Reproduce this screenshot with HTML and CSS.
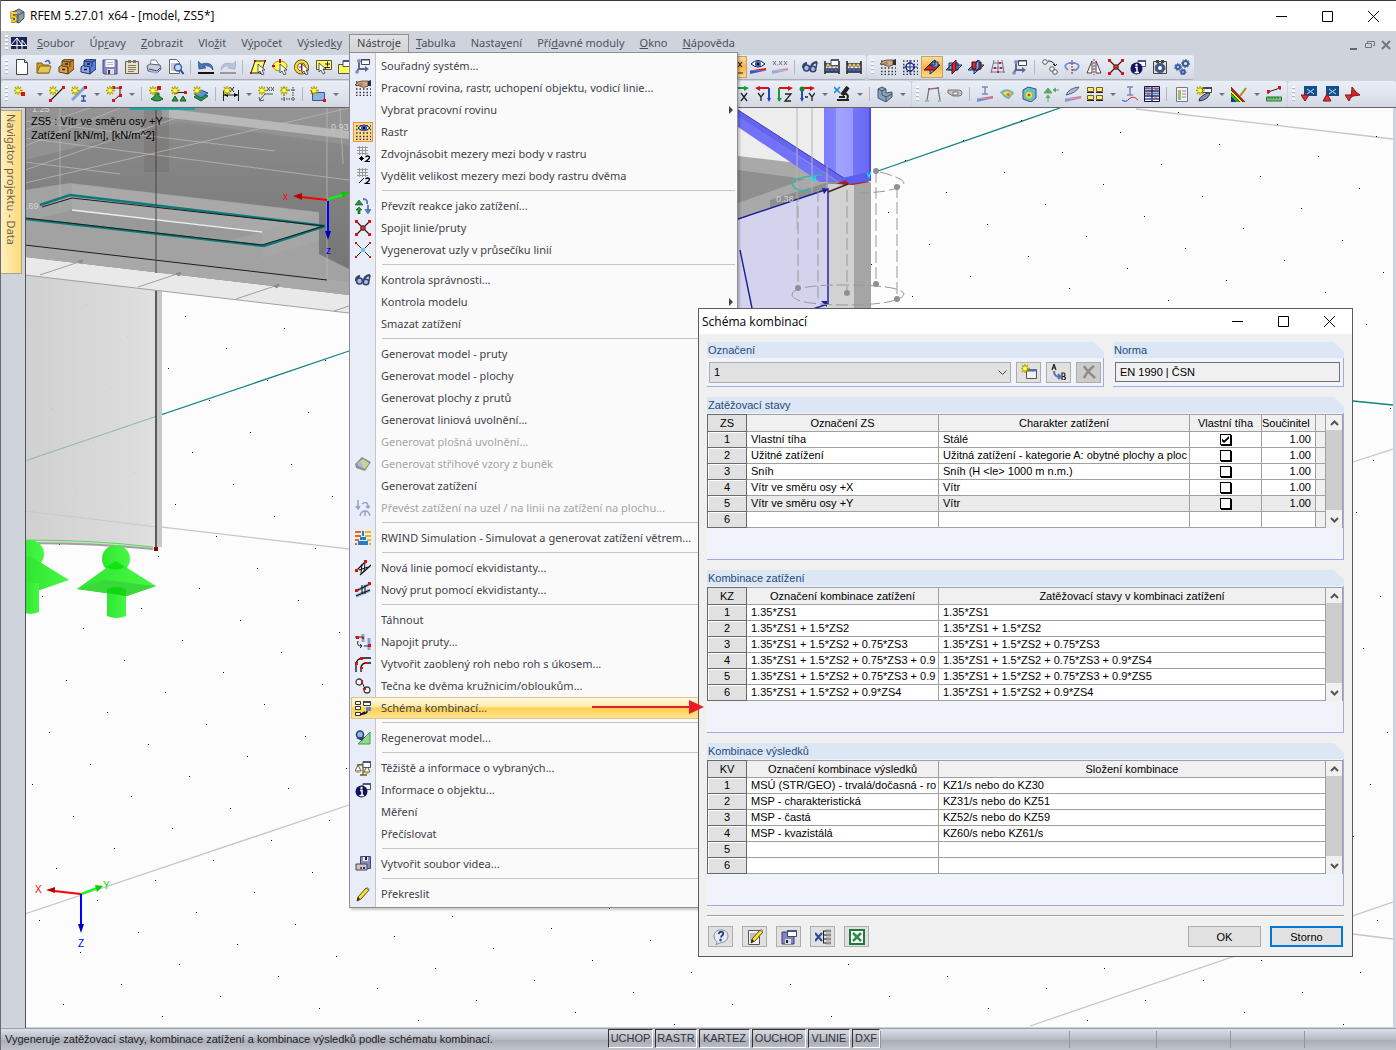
FILE: index.html
```html
<!DOCTYPE html>
<html lang="cs">
<head>
<meta charset="utf-8">
<title>RFEM 5.27.01 x64 - [model, ZS5*]</title>
<link rel="stylesheet" href="styles.css">
</head>
<body>
<svg class="defs" width="0" height="0" aria-hidden="true">
  <defs>
    <linearGradient id="col" x1="0" x2="1" y1="0" y2="0"><stop offset="0" stop-color="#cdcdcd"/><stop offset=".8" stop-color="#d9d9d9"/><stop offset="1" stop-color="#dedede"/></linearGradient>
    <linearGradient id="deck" x1="0" x2="0" y1="0" y2="1"><stop offset="0" stop-color="#8d8d8d"/><stop offset=".4" stop-color="#828282"/><stop offset="1" stop-color="#727272"/></linearGradient>
    <linearGradient id="bluecol" x1="0" x2="1" y1="0" y2="0"><stop offset="0" stop-color="#7d7dff"/><stop offset=".25" stop-color="#8484ff"/><stop offset=".26" stop-color="#a3a3ff"/><stop offset=".62" stop-color="#9a9aff"/><stop offset=".63" stop-color="#7474f8"/><stop offset="1" stop-color="#6868f4"/></linearGradient>
    <linearGradient id="green" x1="0" x2="1" y1="0" y2="0"><stop offset="0" stop-color="#2fe62f"/><stop offset="1" stop-color="#46f846"/></linearGradient>
  </defs>
  <symbol id="star" viewBox="0 0 16 16"><path d="M4 0v9M0 4.500h9M1 1l6 7M7 1l-6 7" stroke="#b3a800" stroke-width="1.400"/><circle cx="4" cy="4.500" r="2" fill="#ffff50"/></symbol>
  <symbol id="win" viewBox="0 0 16 16"><path d="M8 1.500h7.500v6H8z" fill="#fff" stroke="#555"/><path d="M8 1h8v2H8z" fill="#44588c"/></symbol>
  <symbol id="i-new" viewBox="0 0 16 16"><path d="M2.500.5h8l3 3v12h-11z" fill="#fdfdff" stroke="#444"/><path d="M10.500.5v3h3" fill="#ccc" stroke="#444"/></symbol>
  <symbol id="i-open" viewBox="0 0 16 16"><path d="M1 14V4h5l1 2h6v8z" fill="#c9a127" stroke="#7a5e10"/><path d="M1 14l3-7h11l-2 7z" fill="#e3c75a" stroke="#8c6e15"/><path d="M9 3q4-4 5 2" fill="none" stroke="#3b63a8" stroke-width="1.500"/></symbol>
  <symbol id="i-box" viewBox="0 0 16 16"><path d="M1 8l3-2 6 1v8l-9-2z" fill="#e2a24a" stroke="#5b3c10"/><path d="M4 2l3-2 9 1v9l-6 5V8L4 7z" fill="#c98736" stroke="#5b3c10"/><path d="M4 2l8 1 4-2M12 3v5" fill="none" stroke="#5b3c10"/><path d="M4 10.500h3M7 5h3" stroke="#222" stroke-width="1.500"/></symbol>
  <symbol id="i-boxb" viewBox="0 0 16 16"><path d="M1 8l3-2 6 1v8l-9-2z" fill="#8aa9ec" stroke="#1d2f6e"/><path d="M4 2l3-2 9 1v9l-6 5V8L4 7z" fill="#5c80d4" stroke="#1d2f6e"/><path d="M4 2l8 1 4-2M12 3v5" fill="none" stroke="#1d2f6e"/><path d="M4 10.500h3M7 5h3" stroke="#111" stroke-width="1.500"/></symbol>
  <symbol id="i-save" viewBox="0 0 16 16"><path d="M1 1h14v14H2l-1-1z" fill="#8484c4" stroke="#4c4c7e"/><path d="M3.500 1h9v7h-9z" fill="#f5f5fa"/><path d="M5 3.500h6M5 5.500h6" stroke="#bbb"/><path d="M5 10h7v5H5z" fill="#ddd"/><path d="M6 11h2v4H6z" fill="#333"/></symbol>
  <symbol id="i-clip" viewBox="0 0 16 16"><path d="M1.500 2.500h13v12h-13z" fill="#e9e0c8" stroke="#6d624c"/><path d="M4 1h3v3H4zM9 1h3v3H9z" fill="#777"/><path d="M4 6.500h8M4 8.500h8M4 10.500h8M4 12.500h6" stroke="#857c68"/></symbol>
  <symbol id="i-print" viewBox="0 0 16 16"><path d="M4 7l1-6h5l3 5" fill="#fff" stroke="#888"/><path d="M1 7l3-2 10 1 1 4-4 4-9-2z" fill="#c9cfdd" stroke="#555c70"/><path d="M3 10l8 2 3-3" stroke="#3a4260" fill="none"/><path d="M3 12l7 3 2-2" fill="#9cb4ee"/></symbol>
  <symbol id="i-prev" viewBox="0 0 16 16"><path d="M1.500.5h7l3 3v11h-10z" fill="#fafafa" stroke="#666"/><path d="M3 5h6M3 7h4M3 9h4M3 11h4" stroke="#999"/><circle cx="10" cy="8.500" r="3.500" fill="#b9dcff" stroke="#3d5ca0" stroke-width="1.400"/><path d="M12.500 11l3 4" stroke="#2a4790" stroke-width="2"/></symbol>
  <symbol id="i-undo" viewBox="0 0 16 16"><path d="M0 2l1 8 7-1-2-2q6-1 9 4Q15 2 3 5z" fill="#4a72bd" stroke="#1c3c7c" stroke-width=".6"/><path d="M0 14h16" stroke="#111" stroke-width="2"/></symbol>
  <symbol id="i-redo" viewBox="0 0 16 16"><path d="M16 2l-1 8-7-1 2-2q-6-1-9 4Q1 2 13 5z" fill="#b9c5dd" stroke="#93a1bd" stroke-width=".6"/><path d="M0 14h16" stroke="#999" stroke-width="2"/></symbol>
  <symbol id="cur" viewBox="0 0 16 16"><path d="M8 5v9l2-2 2 4 2-1-2-4h3z" fill="#fff" stroke="#333" stroke-width=".8"/></symbol>
  <symbol id="i-selp" viewBox="0 0 16 16"><path d="M1 14L5 2h10l-4 12z" fill="#ffff5a" stroke="#222"/><path d="M0 13h2v2H0zM4 1h2v2H4zM14 1h2v2h-2zM10 13h2v2h-2z" fill="#d00"/><use href="#cur"/></symbol>
  <symbol id="i-sele" viewBox="0 0 16 16"><ellipse cx="8" cy="7" rx="7" ry="5" fill="#ffff5a" stroke="#9a8f10"/><path d="M8 0v4M0 7h3" stroke="#d00" stroke-width="2"/><use href="#cur"/></symbol>
  <symbol id="i-selr" viewBox="0 0 16 16"><circle cx="7.500" cy="8" r="5.500" fill="#fff" stroke="#333" stroke-width="4"/><circle cx="7.500" cy="8" r="5.500" fill="none" stroke="#ffdc1e" stroke-width="2.600"/><path d="M5 8h5M7.500 5v6" stroke="#d00"/><use href="#cur"/></symbol>
  <symbol id="i-selm" viewBox="0 0 16 16"><path d="M.5 1.500h15v9H.5z" fill="#ffff5a" stroke="#555"/><path d="M9 5h5M11.500 2.500v5M9 8.500h5" stroke="#222"/><path d="M3 4v9l2-2 2 4 2-1-2-4h3z" fill="#fff" stroke="#333" stroke-width=".8"/></symbol>
  <symbol id="i-selw" viewBox="0 0 16 16"><path d="M.5 5.500h15v9H.5z" fill="#ffff5a" stroke="#555"/><use href="#win" x="-3"/></symbol>
  <symbol id="i-xx" viewBox="0 0 16 16"><path d="M3 3l5 5M8 3L3 8M10 3l4 5M14 3l-4 5M1 14h14" stroke="#222" stroke-width="1.200"/></symbol>
  <symbol id="ramp" viewBox="0 0 16 16"><path d="M0 11.500L16 9v2.500z" fill="#e01818"/><path d="M0 11.500h16L0 15z" fill="#2a48c8" opacity=".9"/></symbol>
  <symbol id="i-eye" viewBox="0 0 16 16"><path d="M1 5q7-7 14 0-7 6-14 0z" fill="#fff" stroke="#113"/><circle cx="8" cy="5" r="3" fill="#2f61ca"/><circle cx="8" cy="5" r="1.300"/><use href="#ramp"/></symbol>
  <symbol id="i-xval" viewBox="0 0 16 16"><path d="M1 2l3 4M4 2L1 6M5 6h1M7 2l3 4M10 2L7 6M12 2l3 4M15 2l-3 4" stroke="#777"/><use href="#ramp" opacity=".4"/></symbol>
  <symbol id="i-glass" viewBox="0 0 16 16"><path d="M1 9q0-4 4-5M9 9q0-5 6-6" fill="none" stroke="#34456f" stroke-width="2.400"/><circle cx="4.500" cy="9" r="3" fill="#a9bce8" stroke="#34456f" stroke-width="1.600"/><circle cx="11" cy="10" r="2.800" fill="#a9bce8" stroke="#34456f" stroke-width="1.600"/><path d="M14 9l1-6" stroke="#34456f" stroke-width="1.500"/></symbol>
  <symbol id="i-aba" viewBox="0 0 16 16"><path d="M1 2v13M15 2v13M1 5h14M1 13h14" stroke="#222" stroke-width="1.500"/><g fill="#e4c45c" stroke="#554" stroke-width=".6"><circle cx="4" cy="6" r="1.800"/><circle cx="8" cy="6" r="1.800"/><circle cx="12" cy="6" r="1.800"/></g><g fill="#4d65a4" stroke="#223" stroke-width=".6"><circle cx="4" cy="11" r="2"/><circle cx="8" cy="11" r="2"/><circle cx="12" cy="11" r="2"/></g></symbol>
  <symbol id="i-abaw" viewBox="0 0 16 16"><use href="#i-aba"/><use href="#win" x="-1" y="-1"/></symbol>
  <symbol id="dots" viewBox="0 0 16 16"><path d="M1 2h15M1 5.500h15M1 9h15M1 12.500h15M1 15.500h15" stroke="#333" stroke-width="1.300" stroke-dasharray="1.500 2"/></symbol>
  <symbol id="i-hand" viewBox="0 0 16 16"><use href="#dots"/><path d="M0 5q3-4 7-4h6v5q-4 2-6 1Q4 5 0 5z" fill="#cfa684" stroke="#54382a" stroke-width=".8"/><path d="M3 5l4-2M5 6l3-2" stroke="#7a543e" stroke-width=".7"/><path d="M13 1l3-1v6l-3 0z" fill="#29303c"/></symbol>
  <symbol id="i-snap" viewBox="0 0 16 16"><use href="#dots"/><circle cx="8" cy="8" r="4" fill="#e6ebfa" stroke="#1c2c88" stroke-width="1.500"/><path d="M8 1v14M1 8h14" stroke="#1c2c88"/></symbol>
  <symbol id="i-pl1" viewBox="0 0 16 16"><path d="M6 5l5-4v10l-5 4z" fill="#77a8e6" stroke="#16325c"/><path d="M0 11l5-5h11l-5 5z" fill="#e02424" stroke="#401010"/><path d="M6 5l5-4v5H6zM8 3h6v5H8z" fill="#77a8e6" stroke="#16325c"/></symbol>
  <symbol id="i-pl2" viewBox="0 0 16 16"><path d="M0 11l5-5h11l-5 5zM3 4h9v7H3z" fill="#77a8e6" stroke="#16325c"/><path d="M6 5l4-4v10l-4 4z" fill="#e02424" stroke="#401010"/></symbol>
  <symbol id="i-pl3" viewBox="0 0 16 16"><path d="M0 11l5-5h11l-5 5zM6 5l4-4v10l-4 4z" fill="#77a8e6" stroke="#16325c"/><path d="M4 3h9v7H4z" fill="#e02424" stroke="#401010"/><path d="M8 4l3-3v8l-3 3z" fill="#77a8e6" stroke="#16325c"/></symbol>
  <symbol id="i-guide" viewBox="0 0 16 16"><path d="M4 1L1 14M8 1v13M12 1l2 13M3 4h10M2 9h12M1 13h14" stroke="#6c7a90" fill="none"/><path d="M4 8h2v2H4zM10 8h2v2h-2zM9 3h2v2H9zM7 12h2v2H7z" fill="#e01818"/></symbol>
  <symbol id="i-cs" viewBox="0 0 16 16"><path d="M4 3v8h6M4 10l-2 4" fill="none" stroke="#5b6a8e" stroke-width="2"/><circle cx="4" cy="3" r="2" fill="#7f90ba"/><circle cx="2" cy="14" r="1.800" fill="#7f90ba"/><path d="M10 8l4 3-4 3z" fill="#5b6a8e"/><path d="M6.500 1.500h8v5h-8z" fill="#fff" stroke="#445"/><path d="M6 1h9v1.500H6z" fill="#445"/></symbol>
  <symbol id="i-mv" viewBox="0 0 16 16"><circle cx="3" cy="3" r="2.300" fill="#fff" stroke="#555"/><circle cx="10" cy="10" r="2.300" fill="#fff" stroke="#555"/><circle cx="13" cy="13" r="2.300" fill="#fff" stroke="#555"/><path d="M6 2q6 0 7 5M11 5l2 2 2-2" fill="none" stroke="#222"/></symbol>
  <symbol id="i-rot" viewBox="0 0 16 16"><path d="M4 11Q-2 6 5 4h6q7 2 1 7H8" fill="none" stroke="#6f92c9" stroke-width="1.800"/><path d="M8 1v15" stroke="#b11" stroke-dasharray="2 1"/></symbol>
  <symbol id="i-mir" viewBox="0 0 16 16"><path d="M6 2v12H1zM10 2v12h5z" fill="#fff" stroke="#444"/><path d="M8 0v16" stroke="#c22" stroke-dasharray="2 1"/></symbol>
  <symbol id="i-x" viewBox="0 0 16 16"><path d="M2 2l12 12M14 2L2 14" stroke="#222" stroke-width="1.300"/><path d="M0 0h3v3H0zM13 0h3v3h-3zM0 13h3v3H0zM13 13h3v3h-3z" fill="#e01010"/><circle cx="8" cy="8" r="2.300" fill="#d33" stroke="#611"/></symbol>
  <symbol id="i-x2" viewBox="0 0 16 16"><path d="M1 1l14 14M15 1L1 15" stroke="#222"/><path d="M0 0h2v2H0zM14 0h2v2h-2zM0 14h2v2H0zM14 14h2v2h-2z" fill="#e01010"/><path d="M6 6h4v4H6z" fill="#6cc0f5"/></symbol>
  <symbol id="i-info" viewBox="0 0 16 16"><use href="#win"/><circle cx="6.500" cy="9.500" r="6" fill="#14145a"/><circle cx="6.500" cy="6" r="1.200" fill="#fff"/><path d="M5 8.500h2v5M4.500 13.500h4.500" stroke="#fff" stroke-width="1.500" fill="none"/></symbol>
  <symbol id="i-set" viewBox="0 0 16 16"><path d="M1.500 2.500h13v12h-13z" fill="#e9e0c8" stroke="#444"/><path d="M4 1h3v3H4zM9 1h3v3H9z" fill="#444"/><circle cx="8" cy="9" r="3.500" fill="#fff" stroke="#3c5384" stroke-width="3"/><circle cx="8" cy="9" r="5" fill="none" stroke="#3c5384" stroke-dasharray="2 2"/></symbol>
  <symbol id="i-gears" viewBox="0 0 16 16"><g fill="#dfe8f8" stroke="#3b5c9c" stroke-width="2"><circle cx="4" cy="8" r="2"/><circle cx="11.500" cy="4.500" r="2.600"/><circle cx="9" cy="13" r="1.800"/></g><g fill="none" stroke="#3b5c9c" stroke-dasharray="1.500 1.500"><circle cx="4" cy="8" r="3.500"/><circle cx="11.500" cy="4.500" r="4"/><circle cx="9" cy="13" r="3"/></g></symbol>
  <symbol id="i-node" viewBox="0 0 16 16"><use href="#star"/><path d="M7 6h4v4H7z" fill="#e01010"/></symbol>
  <symbol id="i-line" viewBox="0 0 16 16"><path d="M1 15L15 1" stroke="#222" stroke-width="1.300"/><path d="M0 13h3v3H0zM13 0h3v3h-3z" fill="#e01010"/><use href="#star"/></symbol>
  <symbol id="i-memb" viewBox="0 0 16 16"><path d="M1 14L14 1" stroke="#7ea4d8" stroke-width="3"/><path d="M13 0h3v3h-3z" fill="#e01010"/><path d="M10 10h5M12.500 10v5M10 15h5" stroke="#3550a0" stroke-width="1.500"/><use href="#star"/></symbol>
  <symbol id="i-poly" viewBox="0 0 16 16"><path d="M5 2h9v7l-7 6" fill="none" stroke="#222"/><path d="M6 0h3v3H6zM13 0h3v3h-3zM13 8h3v3h-3zM6 13h3v3H6z" fill="#e01010"/><use href="#star"/></symbol>
  <symbol id="i-sup" viewBox="0 0 16 16"><path d="M2 13l4-3V7h4v3l4 3q-6 4-12 0z" fill="#2e9a45" stroke="#125c22"/><path d="M8 0h4v4H8z" fill="#e01010"/><use href="#star"/></symbol>
  <symbol id="i-lsup" viewBox="0 0 16 16"><path d="M3 6.500h12" stroke="#222"/><path d="M3 5h3v3H3zM13 5h3v3h-3z" fill="#e01010"/><path d="M1 15l3-5 3 5zM9 15l3-5 3 5z" fill="#2e9a45" stroke="#125c22"/><use href="#star"/></symbol>
  <symbol id="i-ssup" viewBox="0 0 16 16"><path d="M1 11l7-4 7 3-7 5z" fill="#2e9a45" stroke="#125c22"/><path d="M1 8l7-4 7 3-7 5z" fill="#4f97dc" stroke="#1d4f80"/><use href="#star"/></symbol>
  <symbol id="i-dim" viewBox="0 0 16 16"><path d="M.5 4v11M15.500 4v11M1 9h14" stroke="#222"/><path d="M1 9l4-2v4zM15 9l-4-2v4z"/><path d="M7 1l4 5M11 1L7 6" stroke="#222"/><use href="#star"/></symbol>
  <symbol id="i-note" viewBox="0 0 16 16"><path d="M15 8H7l-5 6M1 11l1 4 4-1" fill="none" stroke="#555"/><path d="M9 1l3 4M12 1L9 5M13 1l3 4M16 1l-3 4" stroke="#555"/><use href="#star"/></symbol>
  <symbol id="i-frame" viewBox="0 0 16 16"><path d="M4 1v15M13 1v15M1 4h15M1 13h15" stroke="#333" stroke-dasharray="1.500 1"/><use href="#star"/></symbol>
  <symbol id="i-surf" viewBox="0 0 16 16"><path d="M2.500 6.500h12v8h-12z" fill="#8db3e6" stroke="#33598f"/><path d="M1 5h3v3H1zM13 13h3v3h-3z" fill="#e01010"/><use href="#star"/></symbol>
  <symbol id="i-cubes" viewBox="0 0 16 16"><path d="M1 9l3-3h5v6l-3 3H1zM8 4l3-3h5v6l-3 3H8z" fill="#c2cce4" stroke="#44507c"/><path d="M1 9h5v6M6 9l3-3M8 4h5v6" fill="none" stroke="#44507c"/></symbol>
  <symbol id="i-vx" viewBox="0 0 16 16"><path d="M2 2h10" stroke="#1b9a30" stroke-width="2"/><path d="M2 2v11" stroke="#2343c8" stroke-width="2"/><path d="M11 0l5 2-5 3z" fill="#1b9a30"/><path d="M0 12h5l-3 4z" fill="#2343c8"/><path d="M8 7l6 8M14 7l-6 8" stroke="#222" stroke-width="1.300"/></symbol>
  <symbol id="i-vy" viewBox="0 0 16 16"><path d="M14 2H4" stroke="#d11" stroke-width="2"/><path d="M14 2v11" stroke="#2343c8" stroke-width="2"/><path d="M5 0L0 2l5 3z" fill="#d11"/><path d="M12 12h4l-2 4z" fill="#2343c8"/><path d="M3 7l3 4 3-4M6 11v4" stroke="#222" fill="none" stroke-width="1.300"/></symbol>
  <symbol id="i-vz" viewBox="0 0 16 16"><path d="M2 2h10" stroke="#d11" stroke-width="2"/><path d="M2 2v11" stroke="#1b9a30" stroke-width="2"/><path d="M11 0l5 2-5 3z" fill="#d11"/><path d="M0 12h5l-3 4z" fill="#1b9a30"/><path d="M8 8h6l-6 7h6" stroke="#222" fill="none" stroke-width="1.300"/></symbol>
  <symbol id="i-vmy" viewBox="0 0 16 16"><path d="M2 2h10" stroke="#d11" stroke-width="2"/><path d="M3 2v12" stroke="#2343c8" stroke-width="2"/><circle cx="3" cy="3" r="2.500" fill="#168a28"/><path d="M11 0l5 2-5 3z" fill="#d11"/><path d="M1 12h4l-2 4z" fill="#2343c8"/><path d="M6 11h3M10 7l3 4 3-4M13 11v4" stroke="#222" fill="none" stroke-width="1.300"/></symbol>
  <symbol id="i-mic" viewBox="0 0 16 16"><path d="M14 1L8 9" stroke="#222" stroke-width="4"/><path d="M10 7q6 2 3 6M3 14h12M5 11h6" fill="none" stroke="#222" stroke-width="2"/><path d="M0 1l6 6M6 1L0 7" stroke="#1a8bd8" stroke-width="1.600"/></symbol>
  <symbol id="i-iso" viewBox="0 0 16 16"><path d="M1 3l4-2 4 2v4l6-1v5l-6 5-8-4z" fill="#8ba2b8" stroke="#43566a"/><path d="M1 3l4 2 4-2M5 5v4l4 2 6-3M9 11v5" fill="none" stroke="#43566a"/></symbol>
  <symbol id="i-frm" viewBox="0 0 16 16"><path d="M2 14L4 3l9-1 2 12" fill="none" stroke="#777" stroke-width="1.300"/><path d="M3 2h2v2H3zM12 1h2v2h-2z" fill="#c55"/><path d="M0 15h4M13 15h3" stroke="#5a5"/></symbol>
  <symbol id="i-tube" viewBox="0 0 16 16"><path d="M1 4h11q3 0 3 3t-3 3H6L1 7z" fill="#c5c5c5" stroke="#777"/><path d="M6 6h5v3H6z" fill="#eee" stroke="#777"/></symbol>
  <symbol id="i-ib" viewBox="0 0 16 16"><path d="M5 1h6M8 1v7M5 8h6" stroke="#7b8bb0" stroke-width="1.500"/><use href="#ramp" opacity=".6" y="1"/></symbol>
  <symbol id="i-rb" viewBox="0 0 16 16"><path d="M1 6q7-6 14 1l-5 6q-4 0-9-7z" fill="#7b9fe0"/><path d="M2 6q6-4 12 1l-4 5q-3 0-8-6z" fill="#79c96e"/><path d="M4 7q4-3 8 0l-2 4q-2-1-6-4z" fill="#f5e65b"/><path d="M7 8q3-2 4 0l-1 3z" fill="#e8613d"/></symbol>
  <symbol id="i-rb2" viewBox="0 0 16 16"><path d="M2 4l5-3 8 2v9l-5 4-8-3z" fill="#6db8e0" stroke="#357"/><circle cx="8" cy="9" r="4.500" fill="#70d070"/><circle cx="8" cy="9" r="3" fill="#f3e64d"/><circle cx="8" cy="9" r="1.500" fill="#e04030"/></symbol>
  <symbol id="i-rea" viewBox="0 0 16 16"><path d="M1 7l4-5 4 5zM3 12l2-3 2 3M5 9v7M16 4h-5M13 2l-3 2 3 2" fill="#58a868" stroke="#58a868"/></symbol>
  <symbol id="i-sl" viewBox="0 0 16 16"><path d="M1 9q3-7 13-8-3 6-13 8z" fill="#a9bbd8" stroke="#567"/><use href="#ramp" opacity=".5" y="1"/></symbol>
  <symbol id="i-four" viewBox="0 0 16 16"><path d="M.5 1.500h6v4h-6zM9.500 1.500h6v4h-6zM.5 9.500h6v4h-6zM9.500 9.500h6v4h-6z" fill="#ffe97a" stroke="#6f6020"/><path d="M0 6.500h7M9 6.500h7M0 14.500h7M9 14.500h7" stroke="#222"/></symbol>
  <symbol id="i-mom" viewBox="0 0 16 16"><path d="M5 1h6M8 1v8M5 9h6" stroke="#7b8bb0" stroke-width="1.500"/><path d="M0 14q4 3 7-1" fill="none" stroke="#2a48c8"/><path d="M7 13q4-4 9 1" fill="none" stroke="#d33"/></symbol>
  <symbol id="i-tab" viewBox="0 0 16 16"><path d="M.5.5h15v15H.5z" fill="#fff" stroke="#113"/><path d="M0 5h16M0 10h16M8 0v16" stroke="#222a50" stroke-width="1.500"/><path d="M1 2.500h6M9 2.500h6M1 7.500h6M9 7.500h6M1 13h6M9 13h6" stroke="#5878c8" stroke-width="2"/><path d="M2 2h3M11 3h3M3 8h3M10 12h3" stroke="#d22"/></symbol>
  <symbol id="i-rep" viewBox="0 0 16 16"><path d="M2.500 1.500h11v14h-11z" fill="#f0f2f6" stroke="#778"/><path d="M4 4h3v10H4z" fill="#8bc46d"/><path d="M4 4h3v3H4z" fill="#e09a70"/><path d="M8 5h4M8 8h4M8 11h4" stroke="#889"/></symbol>
  <symbol id="i-brush" viewBox="0 0 16 16"><path d="M3 15q0-5 11-9-1 8-11 9z" fill="#7b90b8" stroke="#333"/><path d="M6.500 1.500h9v5h-9z" fill="#fff" stroke="#445"/><path d="M6 1h10v2H6z" fill="#445"/><use href="#star"/></symbol>
  <symbol id="i-rain" viewBox="0 0 16 16"><path d="M0 1v15h14z" fill="#e01818"/><path d="M0 4v12h12z" fill="#ffee00"/><path d="M0 7v9h9z" fill="#19c519"/><path d="M0 11v5h5z" fill="#2222e0"/><path d="M0 1l14 15M0 4l12 12M0 7l9 9M0 11l5 5" stroke="#111" stroke-width=".7"/><path d="M15 2l-6 8" stroke="#b08a20" stroke-width="2"/></symbol>
  <symbol id="i-ruler" viewBox="0 0 16 16"><path d="M2 8V6l12-4v2" stroke="#222" fill="none"/><path d="M1 4h3v3H1zM12 0h3v3h-3z" fill="#d11"/><path d="M.5 11h15v4H.5z" fill="#7cc47a" stroke="#2c7a2c"/><path d="M3 11v2M6 11v2M9 11v2M12 11v2" stroke="#164"/></symbol>
  <symbol id="i-imp" viewBox="0 0 16 16"><path d="M3 0h13v10H3z" fill="#11508c"/><path d="M6 3l7 5M6 8l7-5" stroke="#cfe6ff"/><path d="M0 9h8l-4 6z" fill="#e03030" stroke="#811"/></symbol>
  <symbol id="i-exp" viewBox="0 0 16 16"><path d="M3 0h13v10H3z" fill="#11508c"/><path d="M6 3l7 5M6 8l7-5" stroke="#cfe6ff"/><path d="M0 15h8L4 8z" fill="#e03030" stroke="#811"/></symbol>
  <symbol id="i-pdf" viewBox="0 0 16 16"><path d="M7 1q4 6 8 8-8 0-12 4Q8 8 7 1z" fill="#d42222" stroke="#8a1010"/><path d="M0 9h7l-3 6z" fill="#e03030" stroke="#811"/></symbol>
  <symbol id="i-geye" viewBox="0 0 16 16"><use href="#dots"/><path d="M3 4q6-6 12 0-6 5-12 0z" fill="#fff" stroke="#113"/><circle cx="9" cy="4" r="3" fill="#2f61ca"/><circle cx="9" cy="4" r="1.200"/></symbol>
  <symbol id="hash" viewBox="0 0 16 16"><path d="M4.500 0v9M7.500 0v9M10.500 0v9M2 1.500h11M2 4.500h11M2 7.500h11" stroke="#999"/></symbol>
  <symbol id="two" viewBox="0 0 16 16"><path d="M10.500 11q2-2 4 0 0 2-4 4.500H15" fill="none" stroke="#000" stroke-width="1.200"/></symbol>
  <symbol id="i-gm" viewBox="0 0 16 16"><use href="#hash"/><use href="#two"/><path d="M4 12.500h5M6.500 10v5M5 11l3 3M8 11l-3 3" stroke="#000"/></symbol>
  <symbol id="i-gd" viewBox="0 0 16 16"><use href="#hash"/><use href="#two"/><path d="M9 10l-5 5" stroke="#000"/></symbol>
  <symbol id="i-load" viewBox="0 0 16 16"><path d="M0 7l4-5 4 5zM4 9l3 3H5v4H3v-4H1z" fill="#1f9a36" stroke="#0a5015" stroke-width=".6"/><path d="M8 1q5 0 4 5M13 7v6M11 12l2 3 2-3z" fill="none" stroke="#5477b4" stroke-width="1.800"/></symbol>
  <symbol id="i-cut" viewBox="0 0 16 16"><path d="M0 8l7-7 9 5-6 9-9-3z" fill="#8c8f86"/><path d="M5 5l3-2 6 4-4 6-6-3z" fill="#cdd395"/><path d="M2 7l3-2 4 7-6-2z" fill="#a8b6f0"/></symbol>
  <symbol id="i-conv" viewBox="0 0 16 16"><path d="M3 0v8M1 6l2 3 2-3M7 4q6-4 6 3M11 6l2 2 2-2M5 16q1-5 5-5t5 5M10 11v5" fill="none" stroke="#96a3c8" stroke-width="1.500"/></symbol>
  <symbol id="i-wind" viewBox="0 0 16 16"><path d="M0 1h6v2H0zM0 5h6v2H0zM0 9h4v2H0z" fill="#e8650e"/><path d="M10 1h6v2h-6zM10 5h6v2h-6zM12 9h4v2h-4z" fill="#f2b40c"/><path d="M7 1h2v5H7zM5 7h6v3H5zM3 11h10v4H3z" fill="#1f7fc8"/><path d="M0 13h2v2H0z" fill="#e8650e"/><path d="M14 13h2v2h-2z" fill="#f2b40c"/></symbol>
  <symbol id="i-off" viewBox="0 0 16 16"><path d="M1 11L11 1M5 15L16 5" stroke="#111" stroke-width="1.300"/><path d="M7 4l-1 9M10 3L9 12M4 10l9-3" stroke="#111"/><path d="M0 9h3v3H0zM9 0h3v3H9z" fill="#e01010"/></symbol>
  <symbol id="i-offm" viewBox="0 0 16 16"><path d="M1 9l14-7M1 14l14-6" stroke="#8ca9d0" stroke-width="3"/><path d="M1 9l14-7M1 14l14-6M7 3v9M10 3v9" stroke="#111"/><path d="M0 7h3v3H0zM13 0h3v3h-3z" fill="#e01010"/></symbol>
  <symbol id="i-conn" viewBox="0 0 16 16"><path d="M8 0v8M14 4v12" stroke="#7ea4d8" stroke-width="3"/><path d="M0 3h8M9 12h6M3 7q-2 5 4 5M5 10l2 2-2 2" stroke="#222" fill="none"/><path d="M1 2h3v3H1zM7 3h2v2H7zM13 10h3v3h-3z" fill="#e01010"/></symbol>
  <symbol id="i-fil" viewBox="0 0 16 16"><path d="M1 16V9q0-7 8-7h7M6 16v-4q0-5 6-5h4" fill="none" stroke="#111" stroke-width="1.300"/><path d="M0 6h3v3H0zM5 1h3v3H5zM5 11h3v2H5zM10 6h3v2h-3z" fill="#e01010"/></symbol>
  <symbol id="i-tan" viewBox="0 0 16 16"><circle cx="4" cy="4" r="3" fill="#fff" stroke="#444" stroke-width="1.300"/><circle cx="12" cy="12" r="3" fill="#fff" stroke="#444" stroke-width="1.300"/><path d="M7 4l3 7" stroke="#222"/><path d="M6 2h2v3H6zM8 10h3v2H8z" fill="#e01010"/></symbol>
  <symbol id="i-sch" viewBox="0 0 16 16"><path d="M.5 1.500h5v3h-5zM.5 6.500h5v3h-5zM.5 12.500h5v3h-5zM8.500 1.500h7v4h-7z" fill="#fff" stroke="#333"/><path d="M8 1h8v2H8z" fill="#445"/><path d="M11 7h5v4h-5z" fill="#5d88cc"/><path d="M7 14q5 0 5-3M5 15l5-3" fill="none" stroke="#111" stroke-width="1.500"/></symbol>
  <symbol id="i-reg" viewBox="0 0 16 16"><path d="M3 14h12V2z" fill="#8fd88e" stroke="#4a9a4a"/><circle cx="5" cy="4.500" r="3.500" fill="#9db4e2" stroke="#2a4278" stroke-width="1.600"/><path d="M1 8l9-1-3 4z" fill="#2a4278"/></symbol>
  <symbol id="i-bal" viewBox="0 0 16 16"><path d="M8 5v10M2 5l11-1M5 15h7" stroke="#6a6030" stroke-width="1.300"/><path d="M3 5l-3 6h6zM12 6l-3 6h6z" fill="#fff" stroke="#6a6030"/><path d="M0 11q3 4 6 0zM9 12q3 4 6 0z" fill="#b9a75c"/><use href="#win"/></symbol>
  <symbol id="i-vid" viewBox="0 0 16 16"><path d="M5.500.5h10v12h-10z" fill="#8b8bbe" stroke="#446"/><path d="M8 1h5v4H8z" fill="#eee"/><path d="M10 1h2v3h-2z" fill="#224"/><path d="M1 8h11v6H1z" fill="#c7c7cc" stroke="#444"/><path d="M5 11h2v2H5z" fill="#d22"/><path d="M8 11h2v2H8z" fill="#22d"/></symbol>
  <symbol id="i-pen" viewBox="0 0 16 16"><path d="M2 15l1-4 8-9 3 2-8 9z" fill="#f4df3c" stroke="#5c500c"/><path d="M2 15l1-4 2 2z" fill="#222"/><path d="M11 2l1-1 3 2-1 1z" fill="#999"/></symbol>
  <symbol id="i-neww" viewBox="0 0 16 16"><path d="M5.500 5.500h10v9h-10z" fill="#f0f0f0" stroke="#555"/><path d="M5 5h11v2.500H5z" fill="#5a6e9e"/><use href="#star"/></symbol>
  <symbol id="i-ab" viewBox="0 0 16 16"><path d="M1 6l2-6 2 6M2 4h2M11 9v7h2q3-2 0-3.500 2-2 0-3.500zM11 12.500h2" fill="none" stroke="#222" stroke-width="1.200"/><path d="M3 7q0 6 6 6M7 10l3 3-3 2" fill="none" stroke="#5577b8" stroke-width="2"/></symbol>
  <symbol id="i-del" viewBox="0 0 16 16"><path d="M3 2q2 4 11 12M13 2Q7 6 3 14" stroke="#8c8c84" stroke-width="2.500" fill="none"/></symbol>
  <symbol id="i-help" viewBox="0 0 16 16"><path d="M8 .8q7 .2 7 6.500-.5 6-8 6.500l-4 2 1-3Q.5 11 1 6.500 2 1 8 .8z" fill="#e6ebf5" stroke="#8890a0"/><path d="M5.500 5q1-3 4-2 2 2-1 4l-.5 1.500" fill="none" stroke="#223a78" stroke-width="1.800"/><circle cx="7.500" cy="11" r="1.200" fill="#223a78"/></symbol>
  <symbol id="i-edit" viewBox="0 0 16 16"><path d="M1.500 1.500h11v14h-11z" fill="#f4f4f4" stroke="#555"/><path d="M3 5h6M3 7h6M3 9h5M3 11h5" stroke="#888"/><use href="#i-pen" x="2" y="-1"/></symbol>
  <symbol id="i-savew" viewBox="0 0 16 16"><path d="M1 3h12v12H1z" fill="#8484c4" stroke="#3c3c6e"/><path d="M4 10h6v5H4z" fill="#ddd"/><path d="M5 11h2v3H5z" fill="#222"/><path d="M6.500 1.500h9v6h-9z" fill="#fff" stroke="#445"/><path d="M6 1h10v2H6z" fill="#44588c"/></symbol>
  <symbol id="i-tree" viewBox="0 0 16 16"><path d="M0 4l7 8M7 4l-7 8" stroke="#2c4f9c" stroke-width="2.200"/><path d="M8.500 2v12M8 2h3M8 6h3M8 10h3M8 14h3" stroke="#222"/><path d="M11 1h5v2h-5zM11 5h5v2h-5zM11 9h5v2h-5zM11 13h5v2h-5z" fill="#aaa" stroke="#555" stroke-width=".5"/></symbol>
  <symbol id="i-xls" viewBox="0 0 16 16"><path d="M1 1h14v14H1z" fill="#fff" stroke="#1f7a3a" stroke-width="2"/><path d="M4 4l8 8M12 4l-8 8" stroke="#2f8f48" stroke-width="2.500"/></symbol>
  <symbol id="i-mnu" viewBox="0 0 16 12"><path d="M0 0h16v12H0z" fill="#1b2657"/><path d="M0 8.500h16M6 12V1L0 8M6 1l5 7M11 12V3l4 5" fill="none" stroke="#fff"/></symbol>
  <symbol id="i-app" viewBox="0 0 16 16"><path d="M4 4l6-3 5 3v6l-5 5-5-2z" fill="#8a9cae" stroke="#43525f"/><path d="M4 4l5 3 6-3M9 7v8" stroke="#43525f" fill="none"/><path d="M8 5H3v4q4-1 4 2t-5 2" fill="none" stroke="#6b5300" stroke-width="3"/><path d="M8 5H3v4q4-1 4 2t-5 2" fill="none" stroke="#ffd21e" stroke-width="1.800"/></symbol>
  <symbol id="up" viewBox="0 0 9 6"><path d="M1 5l3.500-3.500L8 5" fill="none" stroke="#555" stroke-width="2"/></symbol>
  <symbol id="down" viewBox="0 0 9 6"><path d="M1 1l3.500 3.500L8 1" fill="none" stroke="#555" stroke-width="2"/></symbol>
</svg>

<div class="app">
  <header class="titlebar">
    <svg class="ic"><use href="#i-app"/></svg>
    <h1>RFEM 5.27.01 x64 - [model, ZS5*]</h1>
    <div class="winbtns">
      <button aria-label="Minimalizovat"><svg width="11" height="11"><path d="M0 5.500h11" stroke="#000"/></svg></button>
      <button aria-label="Maximalizovat"><svg width="11" height="11"><path d="M.5.5h10v10H.5z" fill="none" stroke="#000"/></svg></button>
      <button aria-label="Zavřít"><svg width="11" height="11"><path d="M0 0l11 11M11 0L0 11" stroke="#000"/></svg></button>
    </div>
  </header>

  <nav class="menubar">
    <i class="grip"></i><svg class="mdi"><use href="#i-mnu"/></svg>
    <button><u>S</u>oubor</button><button>Úp<u>r</u>avy</button><button><u>Z</u>obrazit</button><button>Vlo<u>ž</u>it</button><button>V<u>ý</u>počet</button><button>Výsled<u>k</u>y</button><button class="open">Nástro<u>j</u>e</button><button><u>T</u>abulka</button><button>Nasta<u>v</u>ení</button><button>Pří<u>d</u>avné moduly</button><button><u>O</u>kno</button><button><u>N</u>ápověda</button>
    <div class="mdibtns">
      <button aria-label="Minimalizovat okno"><svg width="10" height="10"><path d="M1 9h7" stroke="#666" stroke-width="2"/></svg></button>
      <button aria-label="Obnovit okno"><svg width="10" height="10"><path d="M2.500 3V1.500h7v4H8M.5 3.500h6v4h-6z" fill="none" stroke="#777"/></svg></button>
      <button aria-label="Zavřít okno"><svg width="10" height="10"><path d="M1 1l8 8M9 1L1 9" stroke="#777" stroke-width="2"/></svg></button>
    </div>
  </nav>

  <div class="toolrow">
    <div class="toolbar">
      <i class="grip"></i>
      <button><svg class="ic"><use href="#i-new"/></svg></button><button><svg class="ic"><use href="#i-open"/></svg></button><button><svg class="ic"><use href="#i-box"/></svg></button><button><svg class="ic"><use href="#i-boxb"/></svg></button><button><svg class="ic"><use href="#i-save"/></svg></button><button><svg class="ic"><use href="#i-clip"/></svg></button><button><svg class="ic"><use href="#i-print"/></svg></button><button><svg class="ic"><use href="#i-prev"/></svg></button><i class="sep"></i><button><svg class="ic"><use href="#i-undo"/></svg></button><button><svg class="ic"><use href="#i-redo"/></svg></button><i class="sep"></i><button><svg class="ic"><use href="#i-selp"/></svg></button><button><svg class="ic"><use href="#i-sele"/></svg></button><button><svg class="ic"><use href="#i-selr"/></svg></button><button><svg class="ic"><use href="#i-selm"/></svg></button><button><svg class="ic"><use href="#i-selw"/></svg></button>
      <span class="gap-a"></span>
      <button class="on"><svg class="ic"><use href="#i-xx"/></svg></button><button><svg class="ic"><use href="#i-eye"/></svg></button><button><svg class="ic"><use href="#i-xval"/></svg></button><i class="sep"></i><button><svg class="ic"><use href="#i-glass"/></svg></button><button><svg class="ic"><use href="#i-abaw"/></svg></button><button><svg class="ic"><use href="#i-aba"/></svg></button>
    </div>
    <div class="toolbar">
      <i class="grip"></i>
      <button><svg class="ic"><use href="#i-hand"/></svg></button><button><svg class="ic"><use href="#i-snap"/></svg></button><button class="on"><svg class="ic"><use href="#i-pl1"/></svg></button><button><svg class="ic"><use href="#i-pl2"/></svg></button><button><svg class="ic"><use href="#i-pl3"/></svg></button><button><svg class="ic"><use href="#i-guide"/></svg></button><button><svg class="ic"><use href="#i-cs"/></svg></button><i class="sep"></i><button><svg class="ic"><use href="#i-mv"/></svg></button><button><svg class="ic"><use href="#i-rot"/></svg></button><button><svg class="ic"><use href="#i-mir"/></svg></button><button><svg class="ic"><use href="#i-x"/></svg></button><button><svg class="ic"><use href="#i-info"/></svg></button><button><svg class="ic"><use href="#i-set"/></svg></button><button><svg class="ic"><use href="#i-gears"/></svg></button>
    </div>
  </div>
  <div class="toolrow second">
    <div class="toolbar">
      <i class="grip"></i>
      <button><svg class="ic"><use href="#i-node"/></svg></button><button class="dd"></button><button><svg class="ic"><use href="#i-line"/></svg></button><button><svg class="ic"><use href="#i-memb"/></svg></button><button class="dd"></button><button><svg class="ic"><use href="#i-poly"/></svg></button><button class="dd"></button><i class="sep"></i><button><svg class="ic"><use href="#i-sup"/></svg></button><button><svg class="ic"><use href="#i-lsup"/></svg></button><button><svg class="ic"><use href="#i-ssup"/></svg></button><i class="sep"></i><button><svg class="ic"><use href="#i-dim"/></svg></button><button class="dd"></button><button><svg class="ic"><use href="#i-note"/></svg></button><button><svg class="ic"><use href="#i-frame"/></svg></button><i class="sep"></i><button><svg class="ic"><use href="#i-surf"/></svg></button><button class="dd"></button>
      <span class="gap-b"></span>
      <button><svg class="ic"><use href="#i-cubes"/></svg></button><i class="sep"></i><button><svg class="ic"><use href="#i-vx"/></svg></button><button><svg class="ic"><use href="#i-vy"/></svg></button><button><svg class="ic"><use href="#i-vz"/></svg></button><button><svg class="ic"><use href="#i-vmy"/></svg></button><button class="dd"></button><button><svg class="ic"><use href="#i-mic"/></svg></button><button class="dd"></button><i class="sep"></i><button><svg class="ic"><use href="#i-iso"/></svg></button><button class="dd"></button>
    </div>
    <div class="toolbar">
      <i class="grip"></i>
      <button><svg class="ic"><use href="#i-frm"/></svg></button><button><svg class="ic"><use href="#i-tube"/></svg></button><i class="sep"></i><button><svg class="ic"><use href="#i-ib"/></svg></button><button><svg class="ic"><use href="#i-rb"/></svg></button><button><svg class="ic"><use href="#i-rb2"/></svg></button><button><svg class="ic"><use href="#i-rea"/></svg></button><button><svg class="ic"><use href="#i-sl"/></svg></button><button><svg class="ic"><use href="#i-four"/></svg></button><button class="dd"></button><button><svg class="ic"><use href="#i-mom"/></svg></button><button><svg class="ic"><use href="#i-tab"/></svg></button><i class="sep"></i><button><svg class="ic"><use href="#i-rep"/></svg></button><button><svg class="ic"><use href="#i-brush"/></svg></button><button class="dd"></button><button><svg class="ic"><use href="#i-rain"/></svg></button><button class="dd"></button><button><svg class="ic"><use href="#i-ruler"/></svg></button>
    </div>
    <div class="toolbar last">
      <i class="grip"></i>
      <button><svg class="ic"><use href="#i-imp"/></svg></button><button><svg class="ic"><use href="#i-exp"/></svg></button><button><svg class="ic"><use href="#i-pdf"/></svg></button>
    </div>
  </div>

  <main class="work">
    <aside class="side"><button class="navtab">Navigátor projektu - Data</button></aside>
    <section class="view">
      <svg class="scene" width="100%" height="100%">
        <g transform="translate(-26 -108)">
          <g fill="none" stroke="#c6c6c6" stroke-width="1.300">
            <path d="M25 511L700 590M25 914L349 805M1030 1026L1393 902M1353 934L1393 939M1136 109L1393 139M1353 462L1393 449"/>
          </g>
          <path d="M25 461L349 351M875 172L1060 108M1353 401L1393 405" fill="none" stroke="#128383" stroke-width="1.300"/>
          <path id="raster" d="" stroke="#000" shape-rendering="crispEdges"/>
          <!-- column under the deck -->
          <path d="M25 258l132 14v277L25 541z" fill="url(#col)" fill-opacity=".93"/>
          <path d="M157 272h5v275h-5z" fill="#c8c8c8"/>
          <path d="M25 511l132 16" stroke="#c9c9c9"/><path d="M25 461l132-45" stroke="#93b5b3"/>
          <path d="M156 108v440" stroke="#222" stroke-width="1.400"/>
          <path d="M25 543q70 0 128 6" fill="none" stroke="#a0a0a0" stroke-width="2"/><path d="M25 540q70 0 128 7" fill="none" stroke="#57d957"/>
          <path d="M154 547h4v4h-4z" fill="#800"/>
          <!-- supports -->
          <g fill="url(#green)">
            <circle cx="30" cy="554" r="14"/><path d="M30 556l39 24-29 10-15-2v-30z"/><path d="M25 583h14v29q-5 3-14 1z"/>
            <circle cx="116" cy="559" r="14"/><path d="M116 561l40 25-29 10-50-7z"/><path d="M107 587h19v29q-9 4-19 0z"/>
          </g>
          <path d="M77 589l28-9 51 6-29 10z" fill="#3ad83a"/><path d="M107 589q9-4 19 0v7l-19-3z" fill="#12d612"/><path d="M106 567l10-6 9 6q-9 5-19 0z" fill="#10e410"/>
          <!-- deck seen from below -->
          <path d="M25 257l324 38v18L25 275z" fill="#e9e9e9"/>
          <path d="M25 108h324v187L25 257z" fill="url(#deck)"/>
          <path d="M25 108h324v37L180 122l-90 22-65 16z" fill="#999" opacity=".6"/>
          <path d="M162 108l187 23v8l-187-22z" fill="#b8b8b8"/>
          <path d="M25 190l45-7 249 29v42l30 15v26L25 257z" fill="#a2a2a2"/>
          <path d="M72 184l247 29-57 19-190-22z" fill="#a9a9a9"/>
          <path d="M72 210l190 22-56 14L25 222z" fill="#999"/><path d="M262 232l57-19v27l-57 18z" fill="#a6a6a6"/>
          <path d="M25 218l237 26v14L25 233z" fill="#a2a2a2"/>
          <path d="M25 244l324 38v13L25 257z" fill="#aaa" opacity=".8"/>
          <path d="M144 108h25v64h-25z" fill="#6d6462" opacity=".3"/>
          <path d="M25 130L90 108M25 170l160-55M25 146L120 108M25 183L349 108M25 138l324 42M60 108v99M327 108v172M340 108l3 56M25 162l95 12M25 121l250 30" fill="none" stroke="#bdbdbd" opacity=".7"/>
          <path d="M72 210l190 22" stroke="#eee" stroke-width="1.300"/>
          <path d="M25 219l239 27 61-20-40-5L70 195l-30 10" fill="none" stroke="#0f7878" stroke-width="2.500"/>
          <path d="M42 207l30-9 252 28-62 19L25 218M25 245l302 35" fill="none" stroke="#1c1c1c"/>
          <path d="M156 108v165" stroke="#444"/>
          <path d="M25 275l324 38M40 275l42-14M138 287l42-14M236 299l42-14M334 311l15-5" fill="none" stroke="#a0a0a0"/>
          <path d="M78 261l5-1-2 3zM176 274l5-2-2 4zM274 286l5-2-2 4z" fill="#889" stroke="#889"/>
          <path d="M130 109h65" stroke="#1aa" stroke-width="2"/>
          <!-- model axes -->
          <path d="M327 200l-26-3" stroke="#f00" stroke-width="2"/><path d="M293 196l9-3v7z" fill="#b00"/>
          <path d="M328 199l15-4" stroke="#0f0" stroke-width="2"/><path d="M341 192l8 0-6 6z" fill="#0c0"/>
          <path d="M328 201v32" stroke="#00f" stroke-width="2"/><path d="M325 231h6l-3 9z" fill="#00b"/>
          <g class="axis"><text x="283" y="200" fill="#f00">x</text><text x="326" y="254" fill="#00f">z</text></g>
          <g class="val"><text x="32" y="112">1.25</text><text x="331" y="130">0.93</text><text x="26" y="209">.69</text></g>
          <g class="label"><text x="31" y="125">ZS5 : Vítr ve směru osy +Y</text><text x="31" y="139">Zatížení [kN/m], [kN/m^2]</text></g>
          <!-- corner right of the menu -->
          <path d="M738 108h133v81H738z" fill="#ededed"/>
          <path d="M738 156l110 13 23 14v26l-133 29z" fill="#a9a9a9"/>
          <path d="M738 170l67 9-67 24zM770 200l65-20 10 4-75 26z" fill="#8f8f8f"/>
          <path d="M738 218l90-29v124l-90 5z" fill="#d3d3ee"/>
          <path d="M828 184h43v130h-43z" fill="#d2d2d2"/><path d="M854 184h17v130h-17z" fill="#a5a5a5"/>
          <path d="M824 108h46v73l-18 4-28-17z" fill="url(#bluecol)"/><path d="M869 108h2v73h-2z" fill="#4a4ae8"/>
          <path d="M738 110l112 72-6 3-106-68z" fill="#6464ee"/><path d="M738 116l100 66-18 0-82-55z" fill="#7272f8"/><path d="M738 110l112 72" stroke="#3c3cb8"/>
          <path d="M836 184l12-5 22 3-18 3z" fill="#a22"/><path d="M850 184l-8-6 28-6v9z" fill="#5c5cf0"/>
          <path d="M797 108v121M812 108v86M827 165v24" stroke="#b5b5b5"/>
          <path d="M738 219l90-30v115l-90 30M740 250l12 58" fill="none" stroke="#1b1b93" stroke-width="1.400"/>
          <path d="M822 188l6 1-4 5zM821 301h6v6z" fill="#1b1b93"/>
          <path d="M792 184q0-7 30-9M792 184q2 7 20 8" fill="none" stroke="#3ab6b0" stroke-width="1.400"/><path d="M828 192l20-8" stroke="#422" stroke-width="1.400"/>
          <g fill="none" stroke="#989898" stroke-dasharray="12 4"><path d="M876 171v115M897 186v113M798 190v100M818 190v110M847 190v100M880 172q23 6 24 11-5 9-44 10M792 295q0-10 50-10 60 0 62 9-2 10-54 11-56 0-58-10"/></g>
          <g fill="#909090"><circle cx="876" cy="171" r="3"/><circle cx="897" cy="187" r="3"/><circle cx="876" cy="284" r="3"/><circle cx="897" cy="299" r="3"/><circle cx="798" cy="288" r="3"/><circle cx="847" cy="293" r="3"/></g>
          <path d="M812 176v4h3v-4M867 173l2 4 2-5" fill="none" stroke="#0ee" stroke-width="1.300"/>
          <g class="val"><text x="776" y="202">0.38</text></g>
          <!-- corner triad -->
          <path d="M81 894l-27-3" stroke="#f00" stroke-width="2"/><path d="M46 890l9-3v6z" fill="#b00"/>
          <path d="M81 894l16-6" stroke="#0f0" stroke-width="2"/><path d="M95 885l8 1-6 6z" fill="#0c0"/>
          <path d="M81 894v32" stroke="#00f" stroke-width="2"/><path d="M78 924h6l-3 9z" fill="#00b"/>
          <g class="axis"><text x="35" y="893" fill="#f00">X</text><text x="103" y="889" fill="#0d0">Y</text><text x="78" y="947" fill="#00f">Z</text></g>
        </g>
      </svg>
    </section>
  </main>

  <footer class="status">
    <p>Vygeneruje zatěžovací stavy, kombinace zatížení a kombinace výsledků podle schématu kombinací.</p>
    <div class="modes"><button class="m45">UCHOP</button><button class="m42">RASTR</button><button class="m51">KARTEZ</button><button class="m54">OUCHOP</button><button class="m42">VLINIE</button><button class="m28">DXF</button></div>
    <div class="cells"><i></i><i></i><i></i><i></i><i></i></div>
  </footer>

  <div class="menu" role="menu">
    <button><svg class="ic"><use href="#i-cs"/></svg>Souřadný systém...</button>
    <button><svg class="ic"><use href="#i-hand"/></svg>Pracovní rovina, rastr, uchopení objektu, vodicí linie...</button>
    <button class="sub">Vybrat pracovní rovinu</button>
    <button class="ticked"><svg class="ic"><use href="#i-geye"/></svg>Rastr</button>
    <button><svg class="ic"><use href="#i-gm"/></svg>Zdvojnásobit mezery mezi body v rastru</button>
    <button><svg class="ic"><use href="#i-gd"/></svg>Vydělit velikost mezery mezi body rastru dvěma</button>
    <hr>
    <button><svg class="ic"><use href="#i-load"/></svg>Převzít reakce jako zatížení...</button>
    <button><svg class="ic"><use href="#i-x"/></svg>Spojit linie/pruty</button>
    <button><svg class="ic"><use href="#i-x2"/></svg>Vygenerovat uzly v průsečíku linií</button>
    <hr>
    <button><svg class="ic"><use href="#i-glass"/></svg>Kontrola správnosti...</button>
    <button class="sub">Kontrola modelu</button>
    <button>Smazat zatížení</button>
    <hr>
    <button>Generovat model - pruty</button>
    <button>Generovat model - plochy</button>
    <button>Generovat plochy z prutů</button>
    <button>Generovat liniová uvolnění...</button>
    <button disabled>Generovat plošná uvolnění...</button>
    <button disabled><svg class="ic"><use href="#i-cut"/></svg>Generovat střihové vzory z buněk</button>
    <button>Generovat zatížení</button>
    <button disabled><svg class="ic"><use href="#i-conv"/></svg>Převést zatížení na uzel / na linii na zatížení na plochu...</button>
    <hr>
    <button><svg class="ic"><use href="#i-wind"/></svg>RWIND Simulation - Simulovat a generovat zatížení větrem...</button>
    <hr>
    <button><svg class="ic"><use href="#i-off"/></svg>Nová linie pomocí ekvidistanty...</button>
    <button><svg class="ic"><use href="#i-offm"/></svg>Nový prut pomocí ekvidistanty...</button>
    <hr>
    <button>Táhnout</button>
    <button><svg class="ic"><use href="#i-conn"/></svg>Napojit pruty...</button>
    <button><svg class="ic"><use href="#i-fil"/></svg>Vytvořit zaoblený roh nebo roh s úkosem...</button>
    <button><svg class="ic"><use href="#i-tan"/></svg>Tečna ke dvěma kružnicím/obloukům...</button>
    <button class="hot"><svg class="ic"><use href="#i-sch"/></svg>Schéma kombinací...</button>
    <hr>
    <button><svg class="ic"><use href="#i-reg"/></svg>Regenerovat model...</button>
    <hr>
    <button><svg class="ic"><use href="#i-bal"/></svg>Těžiště a informace o vybraných...</button>
    <button><svg class="ic"><use href="#i-info"/></svg>Informace o objektu...</button>
    <button>Měření</button>
    <button>Přečíslovat</button>
    <hr>
    <button><svg class="ic"><use href="#i-vid"/></svg>Vytvořit soubor videa...</button>
    <hr>
    <button><svg class="ic"><use href="#i-pen"/></svg>Překreslit</button>
  </div>

  <div class="dialog" role="dialog" aria-labelledby="dlg-title">
    <div class="dlg-title">
      <h2 id="dlg-title">Schéma kombinací</h2>
      <div class="winbtns">
        <button aria-label="Minimalizovat"><svg width="11" height="11"><path d="M0 5.500h11" stroke="#000"/></svg></button>
        <button aria-label="Maximalizovat"><svg width="11" height="11"><path d="M.5.5h10v10H.5z" fill="none" stroke="#000"/></svg></button>
        <button aria-label="Zavřít"><svg width="11" height="11"><path d="M0 0l11 11M11 0L0 11" stroke="#000"/></svg></button>
      </div>
    </div>
    <div class="dlg-body">
      <div class="top">
        <div class="group grow">
          <label class="ghead" for="ozn">Označení</label>
          <div class="gbody row">
            <div class="combo"><select id="ozn"><option>1</option></select><svg width="9" height="6"><path d="M.5.5l4 4 4-4" fill="none" stroke="#444"/></svg></div>
            <button class="sq" aria-label="Nový"><svg class="ic"><use href="#i-neww"/></svg></button>
            <button class="sq" aria-label="Přejmenovat"><svg class="ic"><use href="#i-ab"/></svg></button>
            <button class="sq off" disabled aria-label="Smazat"><svg class="ic"><use href="#i-del"/></svg></button>
          </div>
        </div>
        <div class="group norm">
          <label class="ghead" for="norma">Norma</label>
          <div class="gbody row"><input id="norma" readonly value="EN 1990 | ČSN"></div>
        </div>
      </div>

      <div class="group">
        <h3 class="ghead">Zatěžovací stavy</h3>
        <div class="gbody grid">
          <table>
            <colgroup><col class="c-id"><col class="c-name"><col><col class="c-self"><col class="c-coef"><col class="c-end"></colgroup>
            <thead><tr><th>ZS</th><th>Označení ZS</th><th>Charakter zatížení</th><th>Vlastní tíha</th><th class="tight">Součinitel</th><th></th></tr></thead>
            <tbody>
              <tr><th>1</th><td>Vlastní tíha</td><td>Stálé</td><td class="ck"><input type="checkbox" aria-label="Vlastní tíha ZS1" checked></td><td class="num">1.00</td><td class="end"></td></tr>
              <tr><th>2</th><td>Užitné zatížení</td><td>Užitná zatížení - kategorie A: obytné plochy a ploc</td><td class="ck"><input type="checkbox" aria-label="Vlastní tíha ZS2"></td><td class="num">1.00</td><td class="end"></td></tr>
              <tr><th>3</th><td>Sníh</td><td>Sníh (H &lt;le&gt; 1000 m n.m.)</td><td class="ck"><input type="checkbox" aria-label="Vlastní tíha ZS3"></td><td class="num">1.00</td><td class="end"></td></tr>
              <tr><th>4</th><td>Vítr ve směru osy +X</td><td>Vítr</td><td class="ck"><input type="checkbox" aria-label="Vlastní tíha ZS4"></td><td class="num">1.00</td><td class="end"></td></tr>
              <tr class="cur"><th>5</th><td>Vítr ve směru osy +Y</td><td>Vítr</td><td class="ck"><input type="checkbox" aria-label="Vlastní tíha ZS5"></td><td class="num">1.00</td><td class="end"></td></tr>
              <tr><th>6</th><td></td><td></td><td></td><td></td><td class="end"></td></tr>
            </tbody>
          </table>
          <div class="scroll"><svg width="9" height="6"><use href="#up"/></svg><i></i><svg width="9" height="6"><use href="#down"/></svg></div>
        </div>
      </div>

      <div class="group">
        <h3 class="ghead">Kombinace zatížení</h3>
        <div class="gbody grid">
          <table>
            <colgroup><col class="c-id"><col class="c-name"><col></colgroup>
            <thead><tr><th>KZ</th><th>Označení kombinace zatížení</th><th>Zatěžovací stavy v kombinaci zatížení</th></tr></thead>
            <tbody>
              <tr><th>1</th><td>1.35*ZS1</td><td>1.35*ZS1</td></tr>
              <tr><th>2</th><td>1.35*ZS1 + 1.5*ZS2</td><td>1.35*ZS1 + 1.5*ZS2</td></tr>
              <tr><th>3</th><td>1.35*ZS1 + 1.5*ZS2 + 0.75*ZS3</td><td>1.35*ZS1 + 1.5*ZS2 + 0.75*ZS3</td></tr>
              <tr><th>4</th><td>1.35*ZS1 + 1.5*ZS2 + 0.75*ZS3 + 0.9</td><td>1.35*ZS1 + 1.5*ZS2 + 0.75*ZS3 + 0.9*ZS4</td></tr>
              <tr><th>5</th><td>1.35*ZS1 + 1.5*ZS2 + 0.75*ZS3 + 0.9</td><td>1.35*ZS1 + 1.5*ZS2 + 0.75*ZS3 + 0.9*ZS5</td></tr>
              <tr><th>6</th><td>1.35*ZS1 + 1.5*ZS2 + 0.9*ZS4</td><td>1.35*ZS1 + 1.5*ZS2 + 0.9*ZS4</td></tr>
            </tbody>
          </table>
          <div class="scroll"><svg width="9" height="6"><use href="#up"/></svg><i></i><svg width="9" height="6"><use href="#down"/></svg></div>
        </div>
      </div>

      <div class="group">
        <h3 class="ghead">Kombinace výsledků</h3>
        <div class="gbody grid">
          <table>
            <colgroup><col class="c-id"><col class="c-name"><col></colgroup>
            <thead><tr><th>KV</th><th>Označení kombinace výsledků</th><th>Složení kombinace</th></tr></thead>
            <tbody>
              <tr><th>1</th><td>MSÚ (STR/GEO) - trvalá/dočasná - ro</td><td>KZ1/s nebo do KZ30</td></tr>
              <tr><th>2</th><td>MSP - charakteristická</td><td>KZ31/s nebo do KZ51</td></tr>
              <tr><th>3</th><td>MSP - častá</td><td>KZ52/s nebo do KZ59</td></tr>
              <tr><th>4</th><td>MSP - kvazistálá</td><td>KZ60/s nebo KZ61/s</td></tr>
              <tr><th>5</th><td></td><td></td></tr>
              <tr><th>6</th><td></td><td></td></tr>
            </tbody>
          </table>
          <div class="scroll"><svg width="9" height="6"><use href="#up"/></svg><i></i><svg width="9" height="6"><use href="#down"/></svg></div>
        </div>
      </div>

      <div class="actions">
        <button class="sq" aria-label="Nápověda"><svg class="ic"><use href="#i-help"/></svg></button>
        <button class="sq" aria-label="Upravit"><svg class="ic"><use href="#i-edit"/></svg></button>
        <button class="sq" aria-label="Uložit"><svg class="ic"><use href="#i-savew"/></svg></button>
        <button class="sq" aria-label="Strom"><svg class="ic"><use href="#i-tree"/></svg></button>
        <button class="sq" aria-label="Export do Excelu"><svg class="ic"><use href="#i-xls"/></svg></button>
        <span class="push"></span>
        <button class="txt">OK</button>
        <button class="txt focus">Storno</button>
      </div>
    </div>
  </div>

  <svg class="pointer" width="112" height="16" aria-hidden="true"><path d="M0 8h98" stroke="#ed1c24" stroke-width="2"/><path d="M97 1l15 7-15 7z" fill="#ed1c24"/></svg>
</div>
<script src="scene.js"></script>
</body>
</html>
```
FILE: styles.css
```css
* { box-sizing: border-box; }
body { margin: 0; font: 11px/16px "Noto Sans", sans-serif; color: #000; }
button, input, select { font: inherit; color: inherit; margin: 0; padding: 0; border: 0; background: none; border-radius: 0; }
h1, h2, h3, p { margin: 0; font-weight: normal; font-size: inherit; }
.defs { position: absolute; }
.ic { width: 16px; height: 16px; flex: none; display: block; }

.app { position: relative; display: flex; flex-direction: column; min-height: 100vh; background: #cfd3dc; overflow: hidden; border-left: 1px solid #6b6b74; }

.titlebar { display: flex; align-items: center; height: 31px; background: #fff; padding-left: 8px; border-top: 1px solid #3a3848; }
.titlebar h1 { margin-left: 5px; font: 12px/16px "Open Sans", "Noto Sans", sans-serif; flex: 1; }
.winbtns { display: flex; }
.winbtns button { width: 46px; height: 24px; display: grid; place-items: center; }

.menubar { display: flex; align-items: center; height: 24px; color: #4a525c; }
.mdi { width: 16px; height: 12px; margin: 0 0 0 3px; flex: none; }
.menubar > .mdi + button { margin-left: 2px; }
.menubar > button { height: 19px; padding: 0 8px; margin-right: -1px; white-space: nowrap; }
.menubar > button.open { background: linear-gradient(#e2e2e4, #d2d2d4); box-shadow: inset 0 0 0 1px #8c8f96; color: #3c434c; }
.mdibtns { display: flex; gap: 6px; margin-left: auto; padding: 4px 5px 0 0; }
.mdibtns svg { display: block; }
.grip { width: 3px; height: 16px; margin-left: 4px; flex: none; background: repeating-linear-gradient(#f8f9fc 0 2px, #b6bac6 2px 3px, transparent 3px 4px); }

.toolrow { display: flex; height: 26px; }
.toolbar { display: flex; align-items: center; height: 25px; background: linear-gradient(#eaeef7, #dde2ec 60%, #d3d8e4); border-bottom: 1px solid #a8adb9; border-radius: 3px; padding-right: 1px; margin-right: 1px; }
.toolbar .grip { margin-right: 3px; }
.second .toolbar { border-bottom: 0; height: 26px; padding-right: 2px; }
.toolbar.last { flex: 1; margin-right: 0; overflow: hidden; }
.second { height: 27px; border-bottom: 1px solid #666; }
.toolbar button { width: 22px; height: 22px; display: grid; place-items: center; flex: none; }
.toolbar button.on { background: linear-gradient(#fce0a4, #fdb448 50%, #fedd86); box-shadow: inset 0 0 0 1px #c2a36b; }
.toolbar button.dd { width: 13px; }
.dd::after { content: ""; border: 3px solid transparent; border-top-color: #707480; border-bottom: 0; }
.sep { width: 8px; height: 14px; flex: none; background: linear-gradient(#b2b6c2, #b2b6c2) 3px 0 / 1px 100% no-repeat; }
.gap-a { width: 368px; flex: none; }
.gap-b { width: 358px; flex: none; }

.work { flex: 1; display: flex; }
.side { width: 25px; padding-top: 2px; border-right: 1px solid #555; flex: none; }
.navtab { writing-mode: vertical-rl; width: 21px; height: 164px; text-align: left; padding: 3px 0; font-size: 11px; color: #6a5f48; border: 1px solid #a9a28c; border-left: 0; background: linear-gradient(90deg, #ffefc0, #ffd976); }
.view { flex: 1; position: relative; background: #fcfcfc; margin: 0 3px 1px 0; overflow: hidden; }
.scene { position: absolute; inset: 0; }
.axis { font: 10px "Liberation Sans", sans-serif; }
.val { font: 9px "Liberation Sans", sans-serif; fill: #d5d5d5; }
.label { font: 11px "Liberation Sans", sans-serif; fill: #000; }

.status { display: flex; height: 22px; border-top: 1px solid #9aa0ab; background: linear-gradient(#dcdfe5, #b4b9c4 50%, #a9aeb8 55%, #c0c3c9); font: 11px/20px "Liberation Sans", sans-serif; color: #222; }
.status p { width: 607px; padding-left: 4px; white-space: nowrap; flex: none; }
.modes { display: flex; gap: 2px; }
.modes button { height: 19px; line-height: 17px; color: #333; text-align: center; border: 1px solid #fff; border-top-color: #333; border-left-color: #333; white-space: nowrap; }
.m28 { width: 28px; } .m42 { width: 42px; } .m45 { width: 45px; } .m51 { width: 51px; } .m54 { width: 54px; }
.cells { flex: 1; display: grid; grid-template-columns: 189fr 88fr 74fr 74fr 92fr; padding: 2px 0; }
.cells i { border-left: 1px solid #969696; }

.menu { position: absolute; left: 348px; top: 52px; width: 389px; padding: 2px 2px 2px 1px; border: 1px solid #8d8d8d; background: linear-gradient(90deg, #e9edf7 25px, #c5c5c5 25px 26px, #fafafa 26px); box-shadow: 2px 2px 2px #0003; color: #3e4249; }
.menu button { position: relative; display: flex; align-items: center; width: 100%; height: 22px; padding-left: 30px; text-align: left; white-space: nowrap; }
.menu .ic { margin: 0 10px 0 -26px; }
.menu button:disabled { color: #a5a5a5; }
.menu hr { margin: 3px 0 4px 31px; border: 0; height: 1px; background: #c5c5c5; }
.menu .ticked .ic { outline: 1px solid #e8933a; background: #ffd98c; box-shadow: 0 0 0 2px #ffd98c; outline-offset: 1px; }
.sub::after { content: ""; margin-left: auto; border: 4px solid transparent; border-left: 4px solid #444; border-right: 0; margin-right: 2px; }
.menu .hot { background: linear-gradient(#fffbe6, #ffe9a8 45%, #ffd04c 50%, #ffe59a); box-shadow: inset 0 0 0 1px #dcc48a; }

.dialog { position: absolute; left: 697px; top: 308px; width: 655px; background: #f0f0f0; border: 1px solid #5a5a5a; font: 11px/16px "Liberation Sans", sans-serif; }
.dlg-title { display: flex; align-items: center; height: 25px; padding-left: 3px; background: #fff; }
.dlg-title h2 { flex: 1; font: 12px/16px "Open Sans", "Noto Sans", sans-serif; }
.dlg-body { display: flex; flex-direction: column; gap: 10px; padding: 8px 8px 9px; }
.top { display: flex; gap: 9px; }
.group { flex: none; }
.top .grow { flex: 1; }
.norm { width: 231px; }
.ghead { display: block; height: 16px; line-height: 16px; padding-left: 1px; color: #1f4a7a; background: #dce6f4; clip-path: polygon(0 0, calc(100% - 10px) 0, 100% 10px, 100% 100%, 0 100%); }
.gbody { background: #f0f3f9; border: solid #a5a8e6; border-width: 0 1px 1px 0; }
.row { display: flex; gap: 5px; align-items: center; height: 29px; padding: 0 2px; }
.combo { position: relative; flex: 1; }
.combo select { appearance: none; width: 100%; height: 21px; padding: 0 4px; border: 1px solid #adadad; background: #e1e1e1; display: block; }
.combo svg { position: absolute; right: 4px; top: 8px; pointer-events: none; }
.norm input { width: 100%; height: 20px; padding: 0 4px; border: 1px solid #707070; background: #f0f0f0; }
.norm .row { padding-right: 3px; }
.sq { width: 25px; height: 21px; border: 1px solid #adadad; background: #e1e1e1; display: grid; place-items: center; flex: none; }
.sq.off { background: #ccc; }
.grid { display: flex; padding: 1px 0 31px; align-items: stretch; }
table { flex: 1; min-width: 0; table-layout: fixed; border-collapse: collapse; background: #fff; }
.c-id { width: 39px; } .c-name { width: 192px; } .c-self { width: 72px; } .c-coef { width: 54px; } .c-end { width: 10px; }
th, td { height: 16px; padding: 0 0 0 4px; border: 1px solid #a0a0a0; line-height: 15px; font-weight: normal; white-space: nowrap; overflow: hidden; text-align: left; }
thead th { height: 17px; padding: 0; text-align: center; background: #f0f0f0; }
thead th.tight { text-align: left; }
tbody th, thead th:first-child { padding: 0; text-align: center; background: #e1e1e1; border-color: #696969; }
tbody th { box-shadow: inset 1px 1px #fff; }
.cur td { background: #ebebeb; }
td.num { text-align: right; padding: 0 4px; }
td.ck { text-align: center; padding: 0; line-height: 0; }
td.end { background: #f0f0f0; padding: 0; }
td.ck input { appearance: none; width: 11px; height: 11px; border: 1px solid #000; background: #fff; box-shadow: 1px 1px #000; vertical-align: middle; position: relative; }
td.ck input:checked::after { content: ""; position: absolute; left: 1px; top: 1px; width: 7px; height: 7px; background: #000; clip-path: polygon(0 40%, 30% 65%, 100% 0, 100% 35%, 30% 100%, 0 75%); }
.scroll { width: 17px; display: flex; flex-direction: column; align-items: center; background: #f0f0f0; padding: 5px 0 5px; border: solid #a0a0a0; border-width: 1px 1px 0 0; }
.scroll svg { flex: none; }
.scroll i { flex: 1; width: 100%; background: #cdcdcd; margin: 4px 0 7px; }
.actions { display: flex; gap: 9px; align-items: center; padding-top: 10px; border-top: 1px solid #a0a0a0; box-shadow: inset 0 1px #fff; margin-top: -1px; }
.actions .sq:first-child { margin-left: 1px; }
.push { flex: 1; }
.txt { width: 73px; height: 21px; border: 1px solid #adadad; background: #e1e1e1; }
.txt.focus { border: 2px solid #0078d7; margin-right: 1px; }

.pointer { position: absolute; left: 591px; top: 699px; }
```
FILE: scene.js
```js
// Work-plane raster: points at origin + m * u + n * v, drawn as one-pixel marks.
const origin = [185, 316], u = [99, 12], v = [-58, 20];
let d = "";
for (let m = -30; m < 50; m++) {
  for (let n = -50; n < 60; n++) {
    const x = origin[0] + m * u[0] + n * v[0];
    const y = origin[1] + m * u[1] + n * v[1];
    if (x > 25 && x < 1394 && y > 108 && y < 1027) d += `M${x} ${y + 0.5}h1`;
  }
}
document.getElementById("raster").setAttribute("d", d);
```
